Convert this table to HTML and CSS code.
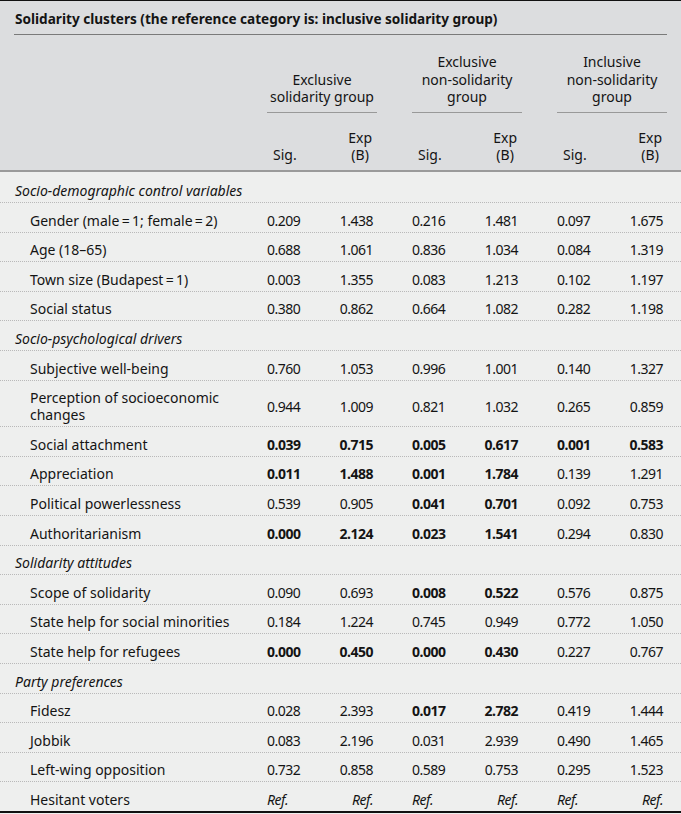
FILE: index.html
```html
<!DOCTYPE html>
<html>
<head>
<meta charset="utf-8">
<link rel="stylesheet" href="styles.css">
</head>
<body>
<div class="table">
  <div class="head">
    <div class="title"><div class="title-text">Solidarity clusters (the reference category is: inclusive solidarity group)</div></div>
    <div class="row groups">
      <div class="label"></div>
      <div class="grp"><div class="gname">Exclusive<br>solidarity group</div></div>
      <div class="grp"><div class="gname">Exclusive<br>non-solidarity<br>group</div></div>
      <div class="grp"><div class="gname">Inclusive<br>non-solidarity<br>group</div></div>
    </div>
    <div class="row subs">
      <div class="label"></div>
      <div class="grp"><span class="sig">Sig.</span><span class="exp">Exp<br>(B)</span></div>
      <div class="grp"><span class="sig">Sig.</span><span class="exp">Exp<br>(B)</span></div>
      <div class="grp"><span class="sig">Sig.</span><span class="exp">Exp<br>(B)</span></div>
    </div>
  </div>
  <div class="body">
    <div class="row section"><div class="label">Socio-demographic control variables</div></div>
    <div class="row item"><div class="label">Gender (male&#8201;=&#8201;1; female&#8201;=&#8201;2)</div>
      <div class="grp"><span class="sig">0.209</span><span class="exp">1.438</span></div>
      <div class="grp"><span class="sig">0.216</span><span class="exp">1.481</span></div>
      <div class="grp"><span class="sig">0.097</span><span class="exp">1.675</span></div></div>
    <div class="row item"><div class="label">Age (18–65)</div>
      <div class="grp"><span class="sig">0.688</span><span class="exp">1.061</span></div>
      <div class="grp"><span class="sig">0.836</span><span class="exp">1.034</span></div>
      <div class="grp"><span class="sig">0.084</span><span class="exp">1.319</span></div></div>
    <div class="row item"><div class="label">Town size (Budapest&#8201;=&#8201;1)</div>
      <div class="grp"><span class="sig">0.003</span><span class="exp">1.355</span></div>
      <div class="grp"><span class="sig">0.083</span><span class="exp">1.213</span></div>
      <div class="grp"><span class="sig">0.102</span><span class="exp">1.197</span></div></div>
    <div class="row item"><div class="label">Social status</div>
      <div class="grp"><span class="sig">0.380</span><span class="exp">0.862</span></div>
      <div class="grp"><span class="sig">0.664</span><span class="exp">1.082</span></div>
      <div class="grp"><span class="sig">0.282</span><span class="exp">1.198</span></div></div>

    <div class="row section"><div class="label">Socio-psychological drivers</div></div>
    <div class="row item"><div class="label">Subjective well-being</div>
      <div class="grp"><span class="sig">0.760</span><span class="exp">1.053</span></div>
      <div class="grp"><span class="sig">0.996</span><span class="exp">1.001</span></div>
      <div class="grp"><span class="sig">0.140</span><span class="exp">1.327</span></div></div>
    <div class="row item"><div class="label">Perception of socioeconomic changes</div>
      <div class="grp"><span class="sig">0.944</span><span class="exp">1.009</span></div>
      <div class="grp"><span class="sig">0.821</span><span class="exp">1.032</span></div>
      <div class="grp"><span class="sig">0.265</span><span class="exp">0.859</span></div></div>
    <div class="row item"><div class="label">Social attachment</div>
      <div class="grp"><span class="sig b">0.039</span><span class="exp b">0.715</span></div>
      <div class="grp"><span class="sig b">0.005</span><span class="exp b">0.617</span></div>
      <div class="grp"><span class="sig b">0.001</span><span class="exp b">0.583</span></div></div>
    <div class="row item"><div class="label">Appreciation</div>
      <div class="grp"><span class="sig b">0.011</span><span class="exp b">1.488</span></div>
      <div class="grp"><span class="sig b">0.001</span><span class="exp b">1.784</span></div>
      <div class="grp"><span class="sig">0.139</span><span class="exp">1.291</span></div></div>
    <div class="row item"><div class="label">Political powerlessness</div>
      <div class="grp"><span class="sig">0.539</span><span class="exp">0.905</span></div>
      <div class="grp"><span class="sig b">0.041</span><span class="exp b">0.701</span></div>
      <div class="grp"><span class="sig">0.092</span><span class="exp">0.753</span></div></div>
    <div class="row item"><div class="label">Authoritarianism</div>
      <div class="grp"><span class="sig b">0.000</span><span class="exp b">2.124</span></div>
      <div class="grp"><span class="sig b">0.023</span><span class="exp b">1.541</span></div>
      <div class="grp"><span class="sig">0.294</span><span class="exp">0.830</span></div></div>

    <div class="row section"><div class="label">Solidarity attitudes</div></div>
    <div class="row item"><div class="label">Scope of solidarity</div>
      <div class="grp"><span class="sig">0.090</span><span class="exp">0.693</span></div>
      <div class="grp"><span class="sig b">0.008</span><span class="exp b">0.522</span></div>
      <div class="grp"><span class="sig">0.576</span><span class="exp">0.875</span></div></div>
    <div class="row item"><div class="label">State help for social minorities</div>
      <div class="grp"><span class="sig">0.184</span><span class="exp">1.224</span></div>
      <div class="grp"><span class="sig">0.745</span><span class="exp">0.949</span></div>
      <div class="grp"><span class="sig">0.772</span><span class="exp">1.050</span></div></div>
    <div class="row item"><div class="label">State help for refugees</div>
      <div class="grp"><span class="sig b">0.000</span><span class="exp b">0.450</span></div>
      <div class="grp"><span class="sig b">0.000</span><span class="exp b">0.430</span></div>
      <div class="grp"><span class="sig">0.227</span><span class="exp">0.767</span></div></div>

    <div class="row section"><div class="label">Party preferences</div></div>
    <div class="row item"><div class="label">Fidesz</div>
      <div class="grp"><span class="sig">0.028</span><span class="exp">2.393</span></div>
      <div class="grp"><span class="sig b">0.017</span><span class="exp b">2.782</span></div>
      <div class="grp"><span class="sig">0.419</span><span class="exp">1.444</span></div></div>
    <div class="row item"><div class="label">Jobbik</div>
      <div class="grp"><span class="sig">0.083</span><span class="exp">2.196</span></div>
      <div class="grp"><span class="sig">0.031</span><span class="exp">2.939</span></div>
      <div class="grp"><span class="sig">0.490</span><span class="exp">1.465</span></div></div>
    <div class="row item"><div class="label">Left-wing opposition</div>
      <div class="grp"><span class="sig">0.732</span><span class="exp">0.858</span></div>
      <div class="grp"><span class="sig">0.589</span><span class="exp">0.753</span></div>
      <div class="grp"><span class="sig">0.295</span><span class="exp">1.523</span></div></div>
    <div class="row item last"><div class="label">Hesitant voters</div>
      <div class="grp"><span class="sig i">Ref.</span><span class="exp i">Ref.</span></div>
      <div class="grp"><span class="sig i">Ref.</span><span class="exp i">Ref.</span></div>
      <div class="grp"><span class="sig i">Ref.</span><span class="exp i">Ref.</span></div></div>
  </div>
</div>
</body>
</html>
```
FILE: styles.css
```css
html, body {
  margin: 0;
  padding: 0;
  background: #eeefee;
}
.table {
  width: 681px;
  font-family: "Noto Sans", "Open Sans", sans-serif;
  font-size: 14px;
  color: #141414;
  line-height: 17px;
}
.head {
  background: #dcdddf;
  border-top: 1px solid #111;
  border-bottom: 2px solid #9a9a9a;
}
.title {
  padding: 0 14px;
}
.title-text {
  font-weight: bold;
  font-size: 13.6px;
  padding: 9px 1px 7px;
  border-bottom: 1px solid #7a7a7a;
}
.row {
  display: flex;
}
.label {
  width: 267px;
  flex: none;
  box-sizing: border-box;
}
.grp {
  width: 110px;
  flex: none;
  display: flex;
  justify-content: space-between;
}
.grp + .grp {
  margin-left: 35px;
}
.groups {
  align-items: flex-end;
  line-height: 17.5px;
  padding-top: 18px;
}
.groups .grp {
  justify-content: center;
  text-align: center;
  border-bottom: 1.5px solid #999;
  padding-bottom: 6px;
}
.subs {
  line-height: 17.5px;
  padding-top: 16px;
  padding-bottom: 6px;
}
.subs .grp {
  align-items: flex-end;
}
.subs .sig {
  padding-left: 6px;
}
.subs .exp {
  text-align: center;
  padding-right: 5px;
}
.body {
  padding-top: 2px;
}
.body .row {
  border-bottom: 1px dotted #b9b9b9;
  padding: 8.6px 0 3px;
  align-items: center;
}
.body .grp {
  letter-spacing: -0.5px;
}
.section .label {
  font-style: italic;
  padding-left: 15px;
  width: auto;
}
.item .label {
  padding-left: 30px;
  padding-right: 14px;
}
.item .exp {
  padding-right: 4px;
}
.body .row.last {
  border-bottom: 2px solid #111;
}
.b {
  font-weight: bold;
}
.i {
  font-style: italic;
}
```
